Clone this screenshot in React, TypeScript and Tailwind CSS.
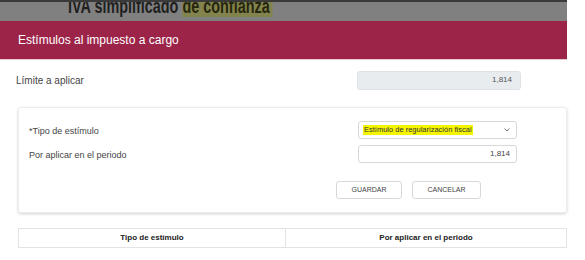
import React from 'react';

const App = () => {
  return (
    <div className="w-[585px] h-[260px] bg-white overflow-hidden font-['Liberation_Sans',Arial,sans-serif] text-[#333]">
      <div className="w-[567px]">
        <div className="h-[2px] bg-[#3a3a3a]" />
        <div className="h-[19px] bg-[#808080] relative overflow-hidden">
          <div className="absolute left-[68px] top-[-6px] text-[20px] font-bold text-[#1f1f1f] leading-none whitespace-nowrap scale-x-[0.72] origin-left">
            IVA simplificado <span className="bg-[#86861c]/50 text-[#26260c] pr-1">de confianza</span>
          </div>
        </div>
        <div className="h-[38px] bg-[#9d2449] flex items-center pl-[18px] text-white text-[12px]">
          Estímulos al impuesto a cargo
        </div>
        <div className="h-px bg-[#e8c8d2]" />

        <div className="flex items-center h-[40px] pl-4">
          <div className="flex-1 text-[10px] text-[#444]">Límite a aplicar</div>
          <div className="w-[164px] h-[19px] mr-[46px] bg-[#e9ecef] border border-[#dee2e6] rounded-[3px] flex items-center justify-end pr-2 text-[8px] text-[#555]">
            1,814
          </div>
        </div>

        <div className="ml-[18px] mt-[7px] h-[106px] border border-[#ececec] rounded-[3px] shadow-[0_1px_3px_rgba(0,0,0,0.18)] pl-[10px] pt-[13px]">
          <div className="flex items-center h-[18px]">
            <div className="w-[329px] pt-[3px] text-[9px] text-[#444]">*Tipo de estímulo</div>
            <div className="w-[159px] h-[18px] border border-[#d8d8d8] rounded-[3px] flex items-center justify-between pl-[4px] pr-[6px]">
              <span className="bg-[#f5f500] text-[7.5px] text-[#333] px-px leading-[10px]">Estímulo de regularización fiscal</span>
              <svg width="6" height="4" viewBox="0 0 6 4" fill="none" stroke="#777" strokeWidth="1">
                <path d="M0.5 0.5 L3 3 L5.5 0.5" />
              </svg>
            </div>
          </div>
          <div className="flex items-center h-[18px] mt-[6px]">
            <div className="w-[329px] pt-[3px] text-[9px] text-[#444]">Por aplicar en el periodo</div>
            <div className="w-[159px] h-[18px] border border-[#d8d8d8] rounded-[3px] flex items-center justify-end pr-[6px] text-[8px] text-[#444]">
              1,814
            </div>
          </div>
          <div className="flex mt-[18px] ml-[307px] gap-[10px]">
            <button className="w-[66px] h-[18px] border border-[#d8d8d8] rounded-[3px] bg-white text-[7px] text-[#444] flex items-center justify-center">
              GUARDAR
            </button>
            <button className="w-[69px] h-[18px] border border-[#d8d8d8] rounded-[3px] bg-white text-[7px] text-[#444] flex items-center justify-center">
              CANCELAR
            </button>
          </div>
        </div>

        <div className="ml-[18px] mt-[15px] h-[20px] border border-[#e3e3e3] flex text-[8px] font-bold text-[#222]">
          <div className="w-[267px] border-r border-[#e3e3e3] flex items-center justify-center">Tipo de estímulo</div>
          <div className="flex-1 flex items-center justify-center">Por aplicar en el periodo</div>
        </div>
      </div>
    </div>
  );
};

export default App;
